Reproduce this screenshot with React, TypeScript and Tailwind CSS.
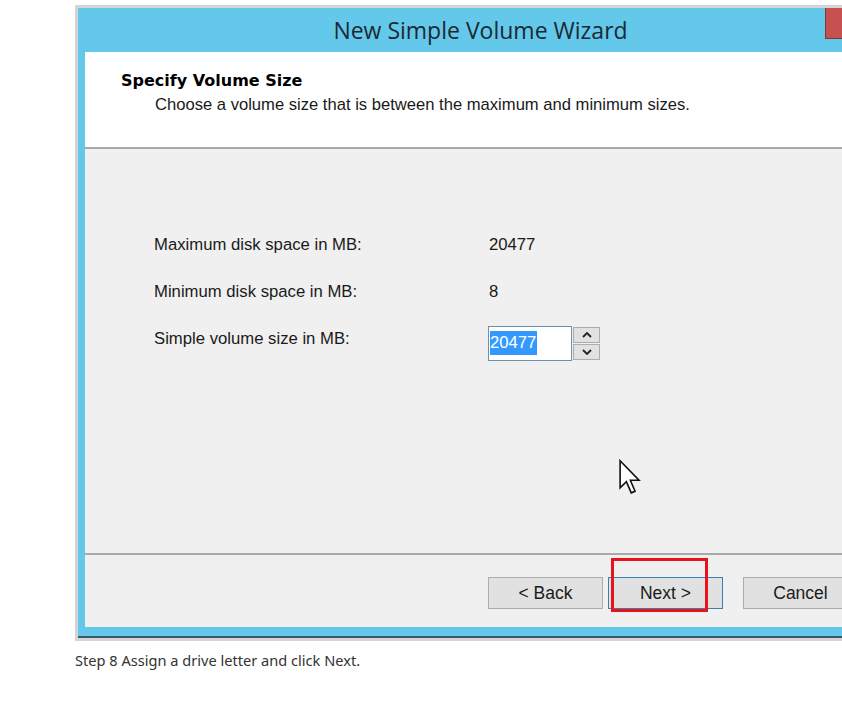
import React from 'react';

const ui = { fontFamily: '"Liberation Sans", Arial, sans-serif' };

function WinButton({ label, focused }: { label: string; focused?: boolean }) {
  return (
    <div
      className={`w-[115px] h-[32px] flex items-center justify-center bg-[#e1e1e1] border text-[17.5px] text-[#1a1a1a] ${focused ? 'border-[#3c7fb1]' : 'border-[#adadad]'}`}
    >
      {label}
    </div>
  );
}

function SpinArrow({ up }: { up?: boolean }) {
  return (
    <svg width="10" height="6" viewBox="0 0 10 6" fill="none">
      <path
        d={up ? 'M1 5 L5 1 L9 5' : 'M1 1 L5 5 L9 1'}
        stroke="#222"
        strokeWidth="1.8"
      />
    </svg>
  );
}

export default function App() {
  return (
    <div className="relative w-[842px] h-[701px] overflow-hidden bg-white" style={ui}>
      <div className="pl-[75px] pt-[5px]">
        {/* Wizard window */}
        <div className="w-[810px] border-[3px] border-[#d5d5d5] bg-[#63c8ea]">
          {/* Title bar */}
          <div className="relative h-[44px] flex items-center justify-center">
            <span
              className="text-[23px] text-[#1b2a33] pl-[1px]"
              style={{ fontFamily: '"Open Sans", "Noto Sans", sans-serif' }}
            >
              New Simple Volume Wizard
            </span>
            <div className="absolute left-[747px] top-0 w-[46px] h-[31px] bg-[#c75050] border border-t-0 border-[#7a3838]" />
          </div>

          <div className="mx-[7px] bg-[#f0f0f0]">
            {/* Header */}
            <div className="h-[97px] bg-white border-b-2 border-[#a9a9a9] pl-[36px] pt-[19px]">
              <div
                className="text-[16px] leading-[20px] font-bold text-black"
                style={{ fontFamily: '"DejaVu Sans", Verdana, sans-serif' }}
              >
                Specify Volume Size
              </div>
              <div className="mt-1 pl-[34px] text-[16.6px] leading-[20px] text-[#1a1a1a]">
                Choose a volume size that is between the maximum and minimum sizes.
              </div>
            </div>

            {/* Body */}
            <div className="h-[404px] pl-[69px] pt-[86px] text-[16.7px] leading-[20px] text-[#1a1a1a]">
              <div className="flex h-[47px]">
                <span className="w-[335px]">Maximum disk space in MB:</span>
                <span>20477</span>
              </div>
              <div className="flex h-[47px]">
                <span className="w-[335px]">Minimum disk space in MB:</span>
                <span>8</span>
              </div>
              <div className="flex">
                <span className="w-[335px]">Simple volume size in MB:</span>
                <div className="flex -mt-[3px] -ml-px">
                  <div className="w-[84px] h-[35px] bg-white border border-[#6d8fb0] pl-px pt-[4px]">
                    <span className="inline-block bg-[#3399ff] text-white leading-[24px] pr-px">20477</span>
                  </div>
                  <div className="flex flex-col gap-px ml-px pt-px">
                    <div className="w-[27px] h-[16px] bg-[#e1e1e1] border border-[#adadad] flex items-center justify-center">
                      <SpinArrow up />
                    </div>
                    <div className="w-[27px] h-[16px] bg-[#e1e1e1] border border-[#adadad] flex items-center justify-center">
                      <SpinArrow />
                    </div>
                  </div>
                </div>
              </div>
            </div>

            {/* Footer */}
            <div className="h-[74px] border-t-2 border-[#a9a9a9] pl-[403px] pt-[22px] flex">
              <WinButton label="< Back" />
              <div className="ml-[5px]">
                <WinButton label="Next >" focused />
              </div>
              <div className="ml-[20px]">
                <WinButton label="Cancel" />
              </div>
            </div>
          </div>

          <div className="h-[11px] border-b-2 border-[#3b5866]" />
        </div>

        <p
          className="mt-[10px] text-[14.6px] leading-[18px] text-[#333]"
          style={{ fontFamily: '"Noto Sans", "Open Sans", sans-serif' }}
        >
          Step 8 Assign a drive letter and click Next.
        </p>
      </div>

      {/* Highlight box */}
      <div className="absolute left-[611px] top-[558px] w-[97px] h-[54px] border-[3px] border-[#e8141c]" />

      {/* Mouse cursor */}
      <svg className="absolute left-[618px] top-[459px]" width="24" height="36" viewBox="0 0 13 20">
        <path
          d="M1 1 L1 16 L4.5 12.6 L7.2 18.8 L9.3 17.9 L6.7 11.8 L11.5 11.8 Z"
          fill="white"
          stroke="#111"
          strokeWidth="0.9"
          strokeLinejoin="miter"
        />
      </svg>
    </div>
  );
}
